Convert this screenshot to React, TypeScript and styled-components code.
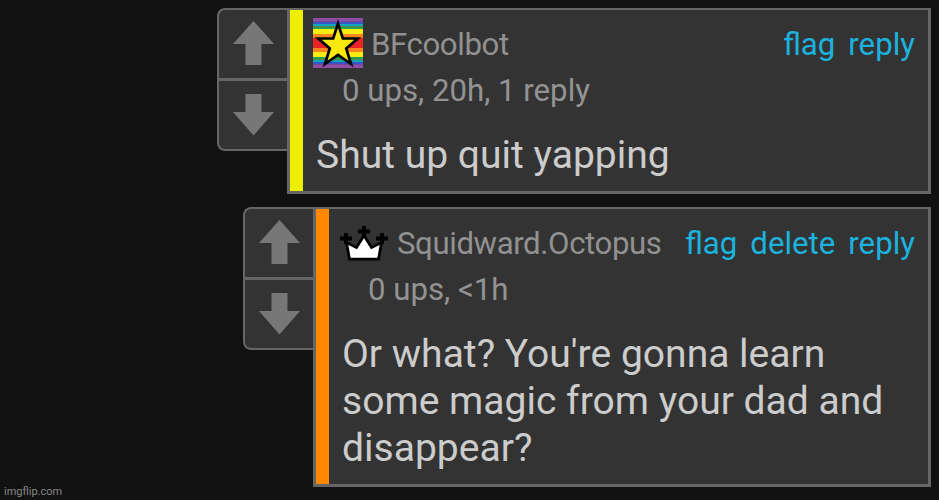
import { ReactNode } from "react";
import styled, { createGlobalStyle } from "styled-components";

const GlobalStyle = createGlobalStyle`
  * {
    box-sizing: border-box;
  }
  body {
    margin: 0;
    background: #111;
    font-family: Roboto, "Liberation Sans", sans-serif;
  }
`;

const Page = styled.main`
  display: flex;
  flex-direction: column;
  width: 939px;
  height: 500px;
  padding: 8px 8px 2px 0;
  overflow: hidden;
`;

const Thread = styled.div`
  display: flex;
  flex-direction: column;
  gap: 13px;
`;

const Comment = styled.article<{ $indent: number; $height: number }>`
  display: flex;
  align-items: flex-start;
  height: ${(p) => p.$height}px;
  padding-left: ${(p) => p.$indent}px;
`;

const Votes = styled.div`
  display: flex;
  flex-direction: column;
  width: 70px;
  height: 143px;
  background: #333;
  border: 2px solid #666;
  border-right: 0;
  border-radius: 8px 0 0 8px;
`;

const VoteButton = styled.button`
  display: flex;
  justify-content: center;
  height: 68px;
  padding: 11px 0 0;
  background: none;
  border: 0;
  & + & {
    height: 71px;
    padding-top: 13px;
    border-top: 3px solid #666;
  }
`;

const Box = styled.section`
  display: flex;
  flex: 1;
  height: 100%;
  background: #333;
  border: 3px solid #666;
  border-width: 2px 3px 3px 3px;
`;

const Stripe = styled.div<{ $color: string }>`
  width: 13px;
  background: ${(p) => p.$color};
`;

const Content = styled.div`
  flex: 1;
  padding: 8px 13px 0 10px;
`;

const Header = styled.header`
  display: flex;
  align-items: center;
  height: 50px;
  font-size: 31.2px;
  line-height: 46px;
`;

const UserName = styled.span`
  margin-left: 8px;
  padding-top: 4px;
  color: #919191;
  letter-spacing: -0.4px;
  white-space: nowrap;
`;

const Actions = styled.nav`
  display: flex;
  gap: 13px;
  margin-left: auto;
  padding-top: 4px;
`;

const Action = styled.a`
  color: #1cb2de;
`;

const Stats = styled.div`
  height: 42px;
  padding-left: 29px;
  color: #939393;
  font-size: 31.2px;
  line-height: 46px;
`;

const Body = styled.p`
  margin: 22px 0 0 3px;
  color: #ccc;
  font-size: 39.05px;
  line-height: 47px;
  white-space: pre-line;
`;

const Footer = styled.footer`
  margin-top: -2px;
  padding-left: 4px;
  color: #888;
  font-size: 11px;
  line-height: 13px;
`;

const UpArrow = () => (
  <svg width="41" height="45" viewBox="0 0 41 45">
    <path d="M20.5 0 41 23H28.5V44H12.5V23H0Z" fill="#777" />
  </svg>
);

const DownArrow = () => (
  <svg width="41" height="43" viewBox="0 0 41 43">
    <path d="M12.5 0H28.5V18H41L20.5 41.5 0 18H12.5Z" fill="#777" />
  </svg>
);

const halfStripes = ["#8e4ea5", "#3656c8", "#10a4b4", "#26a348", "#f7ec13", "#f98420"];
const halfHeights = [3.5, 2.5, 2.5, 2.5, 5, 4];

const StarIcon = () => {
  let y = 0;
  return (
    <svg width="50" height="50" viewBox="0 0 50 50">
      <rect width="50" height="50" fill="#e92326" />
      {halfStripes.map((color, i) => {
        const top = y;
        y += halfHeights[i];
        return (
          <g key={color} fill={color}>
            <rect y={top} width="50" height={halfHeights[i]} />
            <rect y={50 - y} width="50" height={halfHeights[i]} />
          </g>
        );
      })}
      <path
        d="M25 5.5 29.8 20.5H44.8L33.2 30.5 38 46 25 37 12 46 16.8 30.5 5.2 20.5H20.2Z"
        fill="#f8e80d"
        stroke="#000"
        strokeWidth="2.7"
        strokeMiterlimit="8"
      />
    </svg>
  );
};

const CrownIcon = () => (
  <svg width="50" height="50" viewBox="0 0 50 50">
    <path
      d="M25 18.5 32.5 30.5 42.5 25.5 39.5 42.2H10.5L7.5 25.5 17.5 30.5Z"
      fill="#fff"
      stroke="#000"
      strokeWidth="2.8"
    />
    <path
      d="M23 9h4v3.5h4v4h-4V20h-4v-3.5h-4v-4h4ZM5 16h4v3.5h4v4h-4V27H5v-3.5H1v-4h4ZM41 16h4v3.5h4v4h-4V27h-4v-3.5h-4v-4h4Z"
      fill="#000"
    />
  </svg>
);

type CommentProps = {
  indent: number;
  height: number;
  color: string;
  icon: ReactNode;
  name: string;
  stats: string;
  actions: string[];
  text: string;
};

const CommentItem = (props: CommentProps) => (
  <Comment $indent={props.indent} $height={props.height}>
    <Votes>
      <VoteButton aria-label="Upvote"><UpArrow /></VoteButton>
      <VoteButton aria-label="Downvote"><DownArrow /></VoteButton>
    </Votes>
    <Box>
      <Stripe $color={props.color} />
      <Content>
        <Header>
          {props.icon}
          <UserName>{props.name}</UserName>
          <Actions>
            {props.actions.map((action) => (
              <Action key={action}>{action}</Action>
            ))}
          </Actions>
        </Header>
        <Stats>{props.stats}</Stats>
        <Body>{props.text}</Body>
      </Content>
    </Box>
  </Comment>
);

const App: React.FC = () => {
  return (
    <>
      <GlobalStyle />
      <Page>
        <Thread>
          <CommentItem
            indent={217}
            height={186}
            color="#eeee00"
            icon={<StarIcon />}
            name="BFcoolbot"
            stats="0 ups, 20h, 1 reply"
            actions={["flag", "reply"]}
            text="Shut up quit yapping"
          />
          <CommentItem
            indent={243}
            height={280}
            color="#ff8800"
            icon={<CrownIcon />}
            name="Squidward.Octopus"
            stats="0 ups, <1h"
            actions={["flag", "delete", "reply"]}
            text={"Or what? You're gonna learn\nsome magic from your dad and\ndisappear?"}
          />
        </Thread>
        <Footer>imgflip.com</Footer>
      </Page>
    </>
  );
};

export default App;
